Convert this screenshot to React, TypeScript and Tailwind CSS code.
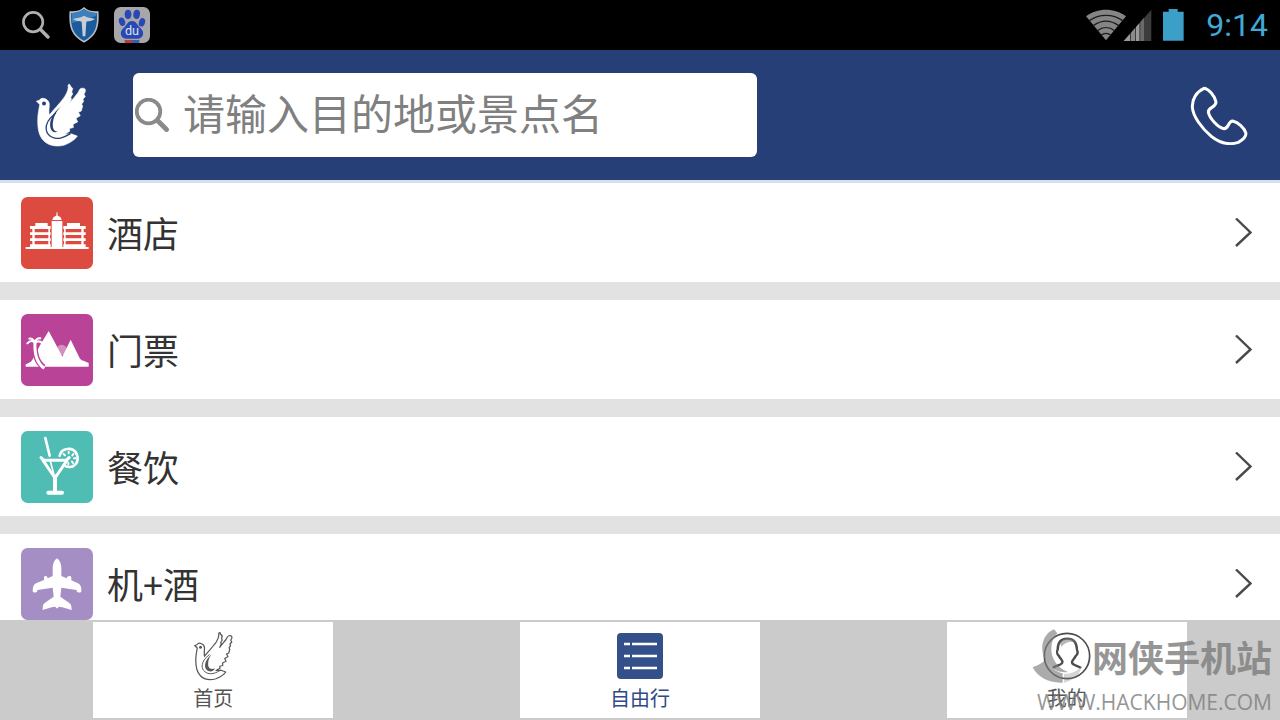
import { useState } from 'react';
import type { ReactNode } from 'react';

const DOVE_BODY =
  'M7 58 L16 55 C20 49 28 48 34 51 C43 55 47 62 46 71 C45 82 44 92 46 101 C57 85 78 66 93 44 C101 31 105 20 103 10 C105 5 109 6 110 12 L117 20 L114 30 L117 36 L111 46 L113 52 L107 65 C114 56 124 44 132 34 C137 27 137 20 144 19 C152 18 157 20 155 29 L151 37 L155 44 L148 52 L150 59 L144 67 L147 73 L143 88 L134 92 L140 102 L127 110 L132 121 L118 128 L119 138 L107 141 L108 149 L92 158 L112 157 L131 164 C124 175 108 185 92 191 C70 197 44 194 29 178 C14 163 11 141 11 116 C11 96 15 82 17 68 Z';

function Dove({ outline = false, className }: { outline?: boolean; className?: string }) {
  return (
    <svg viewBox="0 0 160 200" className={className} aria-hidden="true">
      <path
        d={DOVE_BODY}
        fill={outline ? 'none' : '#fff'}
        stroke={outline ? '#585858' : '#fff'}
        strokeWidth={outline ? 5 : 2}
        strokeLinejoin="round"
      />
      <circle cx="30" cy="65" r="6" fill={outline ? '#585858' : '#263f76'} />
      <path
        d="M66 94 C45 110 34 130 37 146 C41 165 62 174 80 170 C94 167 104 160 111 156"
        fill="none"
        stroke={outline ? '#585858' : '#263f76'}
        strokeWidth="4"
      />
      {outline ? (
        <path d="M74 94 C62 108 59 125 61 139 C64 151 76 156 88 149 C84 162 66 167 54 155 C41 139 51 112 74 94 Z" fill="#585858" />
      ) : (
        <path d="M82 74 C60 94 55 120 57 136 C58 145 64 150 71 150 C62 156 51 149 49 136 C46 116 57 92 82 74 Z" fill="#263f76" />
      )}
    </svg>
  );
}

function SearchIcon({ className, width }: { className?: string; width: number }) {
  return (
    <svg viewBox="0 0 34 34" className={className} fill="none" stroke="currentColor" strokeLinecap="round" aria-hidden="true">
      <circle cx="13.5" cy="13.5" r="11.8" strokeWidth={width} />
      <path d="M22.5 22.5 L31.5 31.5" strokeWidth={width + 1} />
    </svg>
  );
}

function ShieldIcon() {
  return (
    <svg viewBox="0 0 90 108" className="h-9 w-[30px]" aria-hidden="true">
      <path
        d="M45 3 C35 12 20 16 4 15 C1 58 8 84 45 104 C82 84 89 58 86 15 C70 16 55 12 45 3 Z"
        fill="#1b5a9c"
        stroke="#b9bcc0"
        strokeWidth="5"
      />
      <path d="M45 7 C35 16 22 19 8 18 L8 48 C30 42 60 34 82 26 L82 18 C68 18 55 15 45 7 Z" fill="#3a80bd" />
      <path d="M12 36 C24 32 36 32 45 26 C54 32 66 32 78 36 C68 43 58 42 52 44 L49 88 L41 88 L38 44 C32 42 22 43 12 36 Z" fill="#c9ced3" />
    </svg>
  );
}

function PawIcon() {
  return (
    <svg viewBox="0 0 108 108" className="size-9" aria-hidden="true">
      <rect width="108" height="108" rx="20" fill="#a7a7ab" />
      <g fill="#2748b5">
        <ellipse cx="42" cy="22" rx="10" ry="14" />
        <ellipse cx="68" cy="22" rx="10" ry="14" transform="rotate(8 68 22)" />
        <ellipse cx="24" cy="44" rx="9" ry="13" transform="rotate(-18 24 44)" />
        <ellipse cx="84" cy="46" rx="9" ry="13" transform="rotate(18 84 46)" />
        <path d="M54 42 C68 42 70 56 80 64 C92 74 90 94 72 95 C62 95 46 95 36 95 C18 94 16 74 28 64 C38 56 40 42 54 42 Z" />
      </g>
      <text x="54" y="85" textAnchor="middle" fontFamily="Roboto, sans-serif" fontSize="38" fill="#dfe2ee">
        du
      </text>
      <path d="M32 99 H54 V108 H32 Z" fill="#b93d3d" />
      <path d="M54 99 H76 V108 H54 Z" fill="#4259a8" />
    </svg>
  );
}

function StatusIcons() {
  return (
    <svg viewBox="0 0 294 108" className="h-9 w-[98px]" aria-hidden="true">
      <path d="M60 100 L0 28 C34 2 86 2 120 28 Z" fill="#858585" />
      <g fill="none" stroke="#1c1c1c" strokeWidth="4">
        <path d="M10 41 C40 20 80 20 110 41" />
        <path d="M22 56 C46 39 74 39 98 56" />
        <path d="M34 71 C50 59 70 59 86 71" />
        <path d="M46 84 C54 78 66 78 74 84" />
      </g>
      <path d="M113 102 L196 8 V102 Z" fill="#3c3c3c" />
      <path d="M113 102 L132 80 V102 Z" fill="#9a9a9a" />
      <path d="M135 77 L147 63 V102 H135 Z" fill="#8a8a8a" />
      <path d="M150 60 L160 48 V102 H150 Z" fill="#9a9a9a" />
      <path d="M163 45 L174 32 V102 H163 Z" fill="#6a6a6a" />
      <path d="M231 14 H248 V6 H275 V14 H293 V101 H231 Z" fill="#3c9fc8" />
    </svg>
  );
}

function PhoneIcon() {
  return (
    <svg viewBox="0 0 174 180" className="h-[60px] w-[58px]" fill="none" aria-hidden="true">
      <path
        d="M42 10 C20 20 6 42 7 66 C9 94 34 129 64 154 C90 175 120 180 145 172 C158 165 168 155 168 145 C163 129 145 112 128 108 C113 109 118 130 102 131 C84 129 58 99 55 81 C55 66 78 68 78 51 C75 34 57 12 42 10 Z"
        stroke="#fff"
        strokeWidth="9"
        strokeLinejoin="round"
      />
    </svg>
  );
}

function Tile({ color, children }: { color: string; children: ReactNode }) {
  return (
    <svg viewBox="0 0 216 216" className="size-[72px] shrink-0" aria-hidden="true">
      <rect width="216" height="216" rx="20" fill={color} />
      {children}
    </svg>
  );
}

const items = [
  {
    label: '酒店',
    icon: (
      <Tile color="#dd4b40">
        <g fill="#fff">
          <path d="M14 150 H203 V156 H14 Z" />
          <path d="M92 72 H124 V153 H92 Z" />
          <path d="M94 69 C95 60 101 57 106 56 L107 45 H109 L110 56 C115 57 121 60 122 69 Z" />
          <path d="M43 78 H80 V88 H43 Z M138 78 H177 V88 H138 Z" />
          <path d="M27 87 H89 V96 H27 Z M27 106 H89 V114 H27 Z M27 124 H89 V132 H27 Z M27 142 H89 V150 H27 Z" />
          <path d="M127 87 H194 V96 H127 Z M127 106 H194 V114 H127 Z M127 124 H194 V132 H127 Z M127 142 H194 V150 H127 Z" />
          <path d="M34 90 H41 V150 H34 Z M82 90 H87 V150 H82 Z M129 90 H134 V150 H129 Z M181 90 H188 V150 H181 Z" />
        </g>
      </Tile>
    ),
  },
  {
    label: '门票',
    icon: (
      <Tile color="#b94397">
        <circle cx="122" cy="108" r="16" fill="#d48fc1" />
        <path
          d="M14 158 V151 C22 147 30 145 34 137 L58 92 L83 51 L102 86 L124 128 L149 77 L177 134 C183 141 195 141 203 147 V158 Z"
          fill="#fff"
        />
        <path d="M42 92 C40 118 48 146 68 160" fill="none" stroke="#b94397" strokeWidth="17" />
        <path d="M42 84 C40 118 48 148 70 163" fill="none" stroke="#fff" strokeWidth="9" />
        <path
          d="M42 87 C36 79 28 79 19 88 M42 86 C38 76 30 72 25 74 M42 86 C44 76 51 71 58 73 M42 87 C51 80 59 82 64 88"
          fill="none"
          stroke="#fff"
          strokeWidth="6"
          strokeLinecap="round"
        />
      </Tile>
    ),
  },
  {
    label: '餐饮',
    icon: (
      <Tile color="#4fbdb4">
        <g fill="none" stroke="#fff" strokeLinecap="round" strokeLinejoin="round">
          <path d="M73 21 L86 74" strokeWidth="8" />
          <path d="M87 86 L98 128" strokeWidth="5" />
          <path d="M60 80 L68 88 H136 L144 80 M66 88 L102 141 L138 88" strokeWidth="9" />
          <path d="M102 136 V184" strokeWidth="12" />
          <path d="M82 185 H123" strokeWidth="12" />
          <path d="M116 74 C121 50 156 46 167 69 C177 94 158 114 134 106" strokeWidth="8" />
          <path d="M143 63 V67 M128 69 L132 73 M157 69 L154 73 M163 82 H159 M156 96 L153 92 M142 100 V96 M142 83 L146 80" strokeWidth="6" />
        </g>
      </Tile>
    ),
  },
  {
    label: '机+酒',
    icon: (
      <Tile color="#a48ec3">
        <path
          d="M108 31 C101 35 95 48 95 60 V84 L80 91 C79 83 71 82 69 88 V96 L45 106 C37 110 35 119 35 130 C36 135 46 135 49 130 V126 L95 119 L98 146 L70 166 C65 170 65 178 65 186 L92 178 L103 176 L106 181 H110 L113 176 L124 178 L152 186 C152 178 151 170 146 166 L118 146 L121 119 L167 126 V130 C170 135 181 135 181 130 C182 119 179 110 171 106 L151 97 V88 C149 82 139 83 137 91 L121 84 V60 C121 48 115 35 108 31 Z"
          fill="#fff"
        />
      </Tile>
    ),
  },
];

function ListIcon() {
  return (
    <svg viewBox="0 0 46 46" className="size-[46px]" aria-hidden="true">
      <rect width="46" height="46" rx="4" fill="#34508a" />
      <path d="M7 11 H13 M15 11 H40 M7 23 H13 M15 23 H40 M7 35 H13 M15 35 H40" stroke="#fff" strokeWidth="2.4" />
    </svg>
  );
}

function UserIcon() {
  return (
    <svg viewBox="0 0 144 144" className="size-12" fill="none" stroke="#4c4c4c" strokeWidth="5" aria-hidden="true">
      <circle cx="72" cy="72" r="68" />
      <path
        d="M30 108 C36 100 54 102 58 92 C60 84 52 82 48 72 C43 68 40 60 44 53 C44 30 56 20 73 20 C90 20 101 30 102 53 C105 60 103 68 98 72 C94 82 86 84 87 92 C90 102 106 100 114 108"
        strokeWidth="7"
      />
    </svg>
  );
}

const tabs = [
  { id: 'home', label: '首页', icon: <Dove outline className="h-[50px] w-10" /> },
  { id: 'travel', label: '自由行', icon: <ListIcon /> },
  { id: 'mine', label: '我的', icon: <UserIcon /> },
];

function Watermark() {
  return (
    <div className="pointer-events-none absolute right-2 bottom-0 flex flex-col items-end text-[#7d7d7d] opacity-80">
      <div className="flex items-center">
        <svg viewBox="0 0 180 168" className="h-14 w-[60px]" fill="currentColor" aria-hidden="true">
          <path d="M66 4 C32 18 20 62 42 100 C58 126 84 136 108 132 C76 120 56 92 58 58 C59 40 66 26 76 16 Z" opacity=".8" />
          <path d="M2 118 C18 112 32 104 40 96 C52 118 74 132 92 136 V164 C50 166 18 148 2 118 Z" opacity=".8" />
          <path d="M96 138 C122 138 142 126 150 112 C144 142 122 158 96 164 Z" opacity=".4" />
          <path d="M84 44 C96 26 124 26 134 46 C120 38 102 40 88 56 Z" opacity=".7" />
        </svg>
        <span className="text-[36px] leading-[50px] font-bold">网侠手机站</span>
      </div>
      <span className="font-['Open_Sans',sans-serif] text-[21px] leading-9 font-medium">WWW.HACKHOME.COM</span>
    </div>
  );
}

export default function App() {
  const [keyword, setKeyword] = useState('');
  const [activeTab, setActiveTab] = useState('travel');

  return (
    <div className="flex h-screen flex-col overflow-hidden bg-white font-['Noto_Sans_CJK_SC',sans-serif] text-[#333]">
      <div className="flex h-[50px] shrink-0 items-center bg-black pr-3 pl-[22px]">
        <SearchIcon width={3.2} className="size-7 text-[#b0b0b0]" />
        <div className="ml-[19px] flex items-center gap-[15px]">
          <ShieldIcon />
          <PawIcon />
        </div>
        <div className="ml-auto flex items-center gap-[22px]">
          <StatusIcons />
          <span className="font-[Roboto,sans-serif] text-[32px] leading-none text-[#41a9d6]">9:14</span>
        </div>
      </div>

      <header className="flex h-[133px] shrink-0 items-center border-b-[3px] border-[#d8def0] bg-[#263f76] pr-8 pl-[34px]">
        <a href="#home" aria-label="首页">
          <Dove className="h-[66px] w-[53px]" />
        </a>
        <label className="ml-[46px] flex h-[84px] max-w-[624px] flex-1 items-center rounded-md bg-white pl-0.5">
          <SearchIcon width={3.8} className="size-[34px] shrink-0 text-[#8a8a8a]" />
          <input
            type="text"
            aria-label="请输入目的地或景点名"
            placeholder="请输入目的地或景点名"
            value={keyword}
            onChange={(e) => setKeyword(e.target.value)}
            className="h-full w-full min-w-0 bg-transparent pb-2 pl-3.5 text-[42px] outline-none placeholder:text-[#808080]"
          />
        </label>
        <button type="button" aria-label="电话" className="ml-auto">
          <PhoneIcon />
        </button>
      </header>

      <main className="min-h-0 flex-1 overflow-hidden">
        <ul>
          {items.map((item) => (
            <li key={item.label} className="border-b-[18px] border-[#e2e2e2]">
              <a href="#list" className="flex h-[99px] items-center gap-3.5 pr-7 pl-[21px]">
                {item.icon}
                <span className="pb-0.5 text-[36px] leading-none">{item.label}</span>
                <svg viewBox="0 0 17 30" className="ml-auto h-[30px] w-[17px]" fill="none" stroke="#4a4a4a" strokeWidth="2.4" aria-hidden="true">
                  <path d="M1 0.5 L15.5 14.5 L1 28" />
                </svg>
              </a>
            </li>
          ))}
        </ul>
      </main>

      <nav className="relative grid shrink-0 grid-cols-3 justify-items-center bg-[#cbcbcb] py-0.5">
        {tabs.map((tab) => (
          <a
            key={tab.id}
            href={`#${tab.id}`}
            onClick={() => setActiveTab(tab.id)}
            className="flex h-24 w-60 flex-col items-center bg-white pt-[9px]"
          >
            <span className="flex h-[50px] items-center">{tab.icon}</span>
            <span className={`text-[20px] leading-[34px] ${activeTab === tab.id ? 'text-[#2f4a85]' : 'text-[#555]'}`}>
              {tab.label}
            </span>
          </a>
        ))}
        <Watermark />
      </nav>
    </div>
  );
}
